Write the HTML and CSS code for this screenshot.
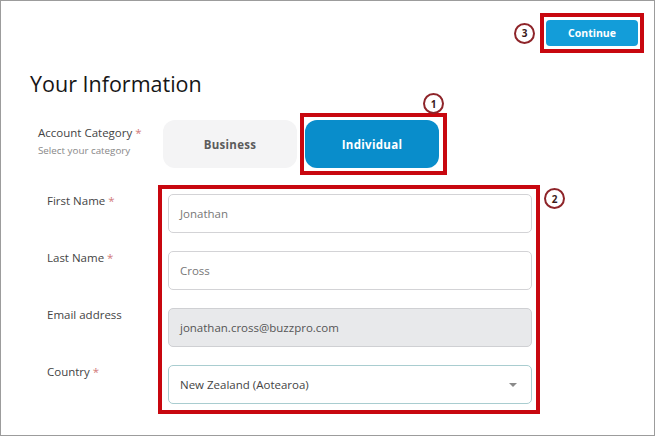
FILE: index.html
```html
<!DOCTYPE html>
<html lang="en">
<head>
    <meta charset="UTF-8">
    <meta name="viewport" content="width=device-width, initial-scale=1.0">
    <title>Your Information</title>
    <link rel="stylesheet" href="styles.css">
</head>
<body>

<div class="page">

    <!-- Top bar with continue -->
    <div class="top-bar">
        <span class="step-badge">3</span>
        <div class="callout callout-continue">
            <button class="continue-btn" type="button">Continue</button>
        </div>
    </div>

    <h1 class="page-title">Your Information</h1>

    <!-- Account category -->
    <div class="category-row">
        <div class="category-label">
            <div class="field-label">Account Category <span class="req">*</span></div>
            <div class="hint">Select your category</div>
        </div>
        <button class="choice choice-business" type="button">Business</button>
        <div class="callout callout-choice">
            <span class="step-badge badge-one">1</span>
            <button class="choice choice-active" type="button">Individual</button>
        </div>
    </div>

    <!-- Personal details -->
    <div class="details-row">
        <div class="labels">
            <label class="field-label" for="first-name">First Name <span class="req">*</span></label>
            <label class="field-label" for="last-name">Last Name <span class="req">*</span></label>
            <label class="field-label" for="email">Email address</label>
            <label class="field-label" for="country">Country <span class="req">*</span></label>
        </div>
        <div class="callout callout-fields">
            <div class="input" id="first-name">Jonathan</div>
            <div class="input" id="last-name">Cross</div>
            <div class="input input-disabled" id="email">jonathan.cross@buzzpro.com</div>
            <div class="input input-select" id="country">
                <span>New Zealand (Aotearoa)</span>
                <span class="caret"></span>
            </div>
        </div>
        <span class="step-badge badge-two">2</span>
    </div>

</div>

</body>
</html>
```

FILE: styles.css
```css
* {
    box-sizing: border-box;
}

body {
    margin: 0;
    font-family: "Open Sans", "Liberation Sans", Arial, sans-serif;
    background-color: #fff;
}

/* Page frame */
.page {
    width: 655px;
    height: 436px;
    border: 1px solid #9c9c9c;
    background-color: #fff;
    overflow: hidden;
}

/* Red annotation boxes */
.callout {
    border: 4px solid #c8070f;
    position: relative;
}

.step-badge {
    display: flex;
    justify-content: center;
    align-items: center;
    width: 21px;
    height: 21px;
    border: 2px solid #8e2429;
    border-radius: 50%;
    background-color: #fff;
    color: #3a1a1a;
    font-size: 10px;
    font-weight: bold;
}

/* Top bar */
.top-bar {
    display: flex;
    justify-content: flex-end;
    align-items: center;
    padding: 12px 10px 0 0;
    gap: 5px;
}

.callout-continue {
    padding: 3px 2px;
}

.continue-btn {
    display: block;
    width: 92px;
    height: 26px;
    border: none;
    border-radius: 4px;
    background-color: #139dd9;
    color: #fff;
    font-family: inherit;
    font-size: 10.5px;
    font-weight: bold;
}

.page-title {
    margin: 15px 0 0 29px;
    font-size: 21.5px;
    line-height: 32px;
    font-weight: normal;
    color: #161616;
}

/* Account category */
.category-row {
    display: flex;
    align-items: center;
    margin-top: 13px;
    padding-left: 37px;
}

.category-label {
    width: 125px;
    align-self: flex-start;
    margin-top: 11px;
}

.field-label {
    display: block;
    font-size: 11.5px;
    line-height: 18px;
    color: #444;
}

.req {
    color: #d27a7a;
}

.hint {
    font-size: 9.8px;
    line-height: 16px;
    color: #888;
    margin-top: 1px;
}

.choice {
    width: 134px;
    height: 48px;
    border: none;
    border-radius: 12px;
    font-family: inherit;
    font-size: 11.5px;
    font-weight: bold;
    letter-spacing: 0.3px;
}

.choice-business {
    background-color: #f4f4f5;
    color: #5b5b5b;
    margin-right: 3px;
}

.callout-choice {
    padding: 3px 4px 3px 1px;
}

.choice-active {
    display: block;
    background-color: #098dcb;
    color: #fff;
}

.badge-one {
    position: absolute;
    top: -24px;
    right: -1px;
}

/* Personal details */
.details-row {
    display: flex;
    align-items: flex-start;
    margin-top: 10px;
    padding-left: 46px;
}

.labels {
    width: 111px;
    display: flex;
    flex-direction: column;
    gap: 39px;
    padding-top: 7px;
}

.callout-fields {
    display: flex;
    flex-direction: column;
    gap: 18px;
    padding: 5px 4px 6px 6px;
}

.input {
    display: flex;
    align-items: center;
    justify-content: space-between;
    width: 364px;
    height: 39px;
    padding: 0 11px;
    border: 1px solid #d3d3d6;
    border-radius: 5px;
    font-size: 11.5px;
    color: #777;
}

.input-disabled {
    background-color: #e8e9eb;
    border-color: #cfd0d3;
    color: #555;
}

.input-select {
    border-color: #a9cdd0;
    color: #444;
}

.caret {
    width: 0;
    height: 0;
    border-left: 4px solid transparent;
    border-right: 4px solid transparent;
    border-top: 4px solid #8a8a8a;
    margin-right: 3px;
}

.badge-two {
    margin: 3px 0 0 4px;
}
```
